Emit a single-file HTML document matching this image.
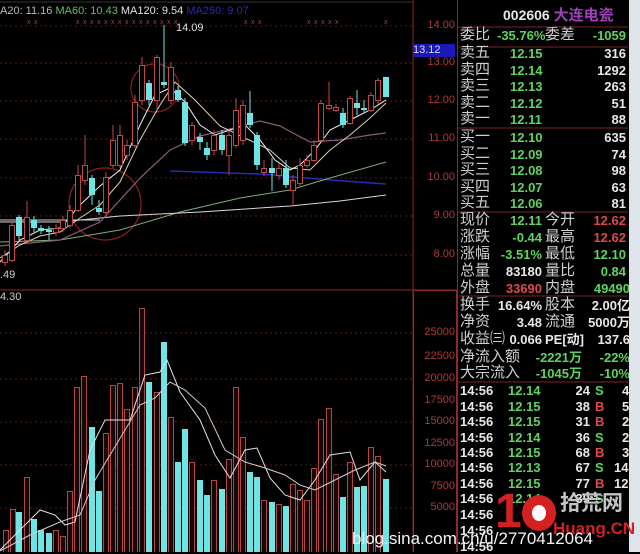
<!DOCTYPE html>
<html><head><meta charset="utf-8">
<style>
html,body{margin:0;padding:0;background:#000;}
body{width:640px;height:552px;position:relative;overflow:hidden;font-family:"Liberation Sans","Noto Sans CJK SC",sans-serif;}
.t{position:absolute;white-space:nowrap;font-size:13px;line-height:15px;font-weight:bold;}
.l{color:#cfcfcf;font-size:15px;font-weight:normal;}
.g{color:#5fd35f;}
.r{color:#e0484f;}
.w{color:#e8e8e8;}
.ra{text-align:right;}
.ax{position:absolute;color:#b03838;font-size:11px;right:185px;text-align:right;}
</style></head><body>
<svg id="c" width="640" height="552" style="position:absolute;left:0;top:0"></svg>

<div class="t" style="left:0;top:4px;font-size:11px;color:#b8b8b8;font-weight:normal">A20: 11.16 <span style="color:#5fc05f">MA60: 10.43</span> <span style="color:#e0e0e0">MA120: 9.54</span> <span style="color:#2a2ab0">MA250: 9.07</span></div>
<div class="t" style="left:176px;top:21px;font-size:11px;color:#ddd;font-weight:normal">14.09</div>
<div class="t" style="left:0;top:268px;font-size:11px;color:#ccc;font-weight:normal">.49</div>
<div class="t" style="left:0;top:290px;font-size:11px;color:#ccc;font-weight:normal">4.30</div>

<div class="ax" style="top:19px">14.00</div>
<div class="ax" style="top:56px">13.00</div>
<div class="ax" style="top:94px">12.00</div>
<div class="ax" style="top:132px">11.00</div>
<div class="ax" style="top:171px">10.00</div>
<div class="ax" style="top:209px">9.00</div>
<div class="ax" style="top:248px">8.00</div>
<div style="position:absolute;left:413px;top:44px;width:42px;height:13px;background:#1a1ab8;color:#d8d8ff;font-size:11px;line-height:13px">13.12</div>
<div class="ax" style="top:326px">25000</div>
<div class="ax" style="top:350px">22500</div>
<div class="ax" style="top:372px">20000</div>
<div class="ax" style="top:394px">17500</div>
<div class="ax" style="top:415px">15000</div>
<div class="ax" style="top:437px">12500</div>
<div class="ax" style="top:458px">10000</div>
<div class="ax" style="top:480px">7500</div>
<div class="ax" style="top:501px">5000</div>

<div class="t w" style="left:503px;top:8px;font-size:14px">002606 <span style="color:#a040b8;font-size:15px">大连电瓷</span></div>
<div class="t l" style="left:460px;top:27px">委比</div><div class="t g" style="left:497px;top:28px">-35.76%</div><div class="t l" style="left:545px;top:27px">委差</div><div class="t g ra" style="left:580px;top:28px;width:46px">-1059</div>

<div class="t l" style="left:460px;top:45px">卖五</div><div class="t g" style="left:510px;top:46px">12.15</div><div class="t w ra" style="left:580px;top:46px;width:46px">316</div>
<div class="t l" style="left:460px;top:62px">卖四</div><div class="t g" style="left:510px;top:63px">12.14</div><div class="t w ra" style="left:580px;top:63px;width:46px">1292</div>
<div class="t l" style="left:460px;top:78px">卖三</div><div class="t g" style="left:510px;top:79px">12.13</div><div class="t w ra" style="left:580px;top:79px;width:46px">263</div>
<div class="t l" style="left:460px;top:95px">卖二</div><div class="t g" style="left:510px;top:96px">12.12</div><div class="t w ra" style="left:580px;top:96px;width:46px">51</div>
<div class="t l" style="left:460px;top:111px">卖一</div><div class="t g" style="left:510px;top:112px">12.11</div><div class="t w ra" style="left:580px;top:112px;width:46px">88</div>

<div class="t l" style="left:460px;top:129px">买一</div><div class="t g" style="left:510px;top:130px">12.10</div><div class="t w ra" style="left:580px;top:130px;width:46px">635</div>
<div class="t l" style="left:460px;top:146px">买二</div><div class="t g" style="left:510px;top:147px">12.09</div><div class="t w ra" style="left:580px;top:147px;width:46px">74</div>
<div class="t l" style="left:460px;top:162px">买三</div><div class="t g" style="left:510px;top:163px">12.08</div><div class="t w ra" style="left:580px;top:163px;width:46px">98</div>
<div class="t l" style="left:460px;top:179px">买四</div><div class="t g" style="left:510px;top:180px">12.07</div><div class="t w ra" style="left:580px;top:180px;width:46px">63</div>
<div class="t l" style="left:460px;top:195px">买五</div><div class="t g" style="left:510px;top:196px">12.06</div><div class="t w ra" style="left:580px;top:196px;width:46px">81</div>

<div class="t l" style="left:460px;top:212px">现价</div><div class="t g ra" style="left:490px;top:213px;width:52px">12.11</div><div class="t l" style="left:545px;top:212px">今开</div><div class="t r ra" style="left:580px;top:213px;width:46px">12.62</div>
<div class="t l" style="left:460px;top:229px">涨跌</div><div class="t g ra" style="left:490px;top:230px;width:52px">-0.44</div><div class="t l" style="left:545px;top:229px">最高</div><div class="t r ra" style="left:580px;top:230px;width:46px">12.62</div>
<div class="t l" style="left:460px;top:246px">涨幅</div><div class="t g ra" style="left:490px;top:247px;width:52px">-3.51%</div><div class="t l" style="left:545px;top:246px">最低</div><div class="t g ra" style="left:580px;top:247px;width:46px">12.10</div>
<div class="t l" style="left:460px;top:263px">总量</div><div class="t w ra" style="left:490px;top:264px;width:52px">83180</div><div class="t l" style="left:545px;top:263px">量比</div><div class="t g ra" style="left:580px;top:264px;width:46px">0.84</div>
<div class="t l" style="left:460px;top:280px">外盘</div><div class="t r ra" style="left:490px;top:281px;width:52px">33690</div><div class="t l" style="left:545px;top:280px">内盘</div><div class="t g ra" style="left:580px;top:281px;width:50px">49490</div>

<div class="t l" style="left:460px;top:297px">换手</div><div class="t w ra" style="left:490px;top:298px;width:52px">16.64%</div><div class="t l" style="left:545px;top:297px">股本</div><div class="t w ra" style="left:580px;top:298px;width:50px">2.00亿</div>
<div class="t l" style="left:460px;top:314px">净资</div><div class="t w ra" style="left:490px;top:315px;width:52px">3.48</div><div class="t l" style="left:545px;top:314px">流通</div><div class="t w ra" style="left:580px;top:315px;width:50px">5000万</div>
<div class="t l" style="left:460px;top:331px">收益㈢</div><div class="t w ra" style="left:490px;top:332px;width:52px">0.066</div><div class="t w" style="left:545px;top:332px">PE[动]</div><div class="t w ra" style="left:580px;top:332px;width:50px">137.6</div>
<div class="t l" style="left:460px;top:349px">净流入额</div><div class="t g ra" style="left:520px;top:350px;width:62px">-2221万</div><div class="t g ra" style="left:580px;top:350px;width:50px">-22%</div>
<div class="t l" style="left:460px;top:365px">大宗流入</div><div class="t g ra" style="left:520px;top:366px;width:62px">-1045万</div><div class="t g ra" style="left:580px;top:366px;width:50px">-10%</div>

<div class="t w" style="left:460px;top:383px">14:56</div><div class="t g" style="left:508px;top:383px">12.14</div><div class="t w ra" style="left:560px;top:383px;width:30px">24</div><div class="t g" style="left:595px;top:383px">S</div><div class="t w" style="left:622px;top:383px">4</div>
<div class="t w" style="left:460px;top:399px">14:56</div><div class="t g" style="left:508px;top:399px">12.15</div><div class="t w ra" style="left:560px;top:399px;width:30px">38</div><div class="t r" style="left:595px;top:399px">B</div><div class="t w" style="left:622px;top:399px">5</div>
<div class="t w" style="left:460px;top:414px">14:56</div><div class="t g" style="left:508px;top:414px">12.15</div><div class="t w ra" style="left:560px;top:414px;width:30px">31</div><div class="t r" style="left:595px;top:414px">B</div><div class="t w" style="left:622px;top:414px">2</div>
<div class="t w" style="left:460px;top:430px">14:56</div><div class="t g" style="left:508px;top:430px">12.14</div><div class="t w ra" style="left:560px;top:430px;width:30px">36</div><div class="t g" style="left:595px;top:430px">S</div><div class="t w" style="left:622px;top:430px">2</div>
<div class="t w" style="left:460px;top:445px">14:56</div><div class="t g" style="left:508px;top:445px">12.15</div><div class="t w ra" style="left:560px;top:445px;width:30px">68</div><div class="t r" style="left:595px;top:445px">B</div><div class="t w" style="left:622px;top:445px">3</div>
<div class="t w" style="left:460px;top:460px">14:56</div><div class="t g" style="left:508px;top:460px">12.13</div><div class="t w ra" style="left:560px;top:460px;width:30px">67</div><div class="t g" style="left:595px;top:460px">S</div><div class="t w" style="left:614px;top:460px">14</div>
<div class="t w" style="left:460px;top:476px">14:56</div><div class="t g" style="left:508px;top:476px">12.15</div><div class="t w ra" style="left:560px;top:476px;width:30px">77</div><div class="t r" style="left:595px;top:476px">B</div><div class="t w" style="left:614px;top:476px">12</div>
<div class="t w" style="left:460px;top:491px">14:56</div><div class="t g" style="left:508px;top:491px">12.14</div><div class="t w ra" style="left:560px;top:491px;width:30px">39</div><div class="t g" style="left:595px;top:491px">S</div>
<div class="t w" style="left:460px;top:507px">14:56</div>
<div class="t w" style="left:460px;top:523px">14:56</div>
<div class="t w" style="left:460px;top:539px">14:56</div>

<div style="position:absolute;left:629px;top:0;width:11px;height:552px;background:#dfe3ea"></div>

<div class="t" style="left:495px;top:486px;font-size:48px;line-height:52px;font-weight:bold;color:#d42020">1</div>
<div style="position:absolute;left:522px;top:495px;width:34px;height:36px;border-radius:50%;background:#d42020"></div>
<div style="position:absolute;left:532px;top:505px;width:14px;height:16px;border-radius:50%;background:#fff"></div>
<div class="t" style="left:560px;top:492px;font-size:21px;line-height:23px;color:#c4c4c4">拾荒网</div>
<div class="t" style="left:553px;top:520px;font-size:17px;line-height:18px;color:#d42020">Huang.CN</div>
<div class="t" style="left:352px;top:530px;font-size:17px;line-height:18px;color:#f4f4f4;font-weight:normal">blog.sina.com.cn/u/2770412064</div>

<script>
var s=document.getElementById('c'),NS='http://www.w3.org/2000/svg';
function el(n,a){var e=document.createElementNS(NS,n);for(var k in a)e.setAttribute(k,a[k]);s.appendChild(e);return e;}
[26,63,101,139,178,216,255].forEach(function(y){el('line',{x1:0,y1:y,x2:412,y2:y,stroke:'#5a1a1a','stroke-dasharray':'2,3'});});
[333,379,422,465,508].forEach(function(y){el('line',{x1:0,y1:y,x2:412,y2:y,stroke:'#5a1a1a','stroke-dasharray':'2,3'});});
el('line',{x1:413,y1:0,x2:413,y2:552,stroke:'#8a2a2a'});
el('line',{x1:457.5,y1:0,x2:457.5,y2:552,stroke:'#8a2a2a'});
el('line',{x1:0,y1:290,x2:457,y2:290,stroke:'#8a2a2a'});
el('rect',{x:413.5,y:290.5,width:43,height:262,fill:'none',stroke:'#8a2a2a'});
[27,47,128,212,296,382].forEach(function(y){el('line',{x1:458,y1:y,x2:628,y2:y,stroke:'#7a2424'});});
el('line',{x1:0,y1:2,x2:413,y2:2,stroke:'#333'});
for(var x=20;x<390;x+=7){if((x>20&&x<36)||(x>75&&x<175)||(x>240&&x<260)||(x>305&&x<340)||(x>378&&x<390))el('text',{x:x,y:24,fill:'#a04060','font-size':7}).textContent='x';}
var C=[[5,255,262,250,266,0],[12,225,260,220,262,0],[19,217,236,215,240,1],[27,217,240,201,242,0],[34,220,228,216,232,1],[41,228,231,225,234,1],[49,230,232,226,240,1],[56,228,232,224,236,0],[63,220,228,216,232,0],[70,210,225,205,228,0],[78,175,210,165,212,0],[85,165,180,135,185,0],[92,178,195,175,205,1],[99,208,212,200,215,1],[106,177,212,172,214,0],[113,140,165,125,168,0],[120,135,165,125,168,0],[127,145,155,140,160,0],[135,102,145,95,148,0],[142,65,100,57,105,0],[149,83,100,80,105,1],[157,57,100,55,110,0],[164,82,85,25,88,1],[171,67,100,62,104,0],[178,90,100,86,102,1],[185,102,143,98,146,1],[192,125,140,122,145,0],[200,137,142,133,150,1],[207,148,155,142,160,1],[214,135,150,130,155,0],[222,135,150,130,155,1],[229,135,155,130,175,0],[236,110,145,98,148,0],[243,105,140,100,145,0],[250,113,125,91,128,1],[257,135,165,132,170,1],[264,168,172,160,176,0],[272,168,173,158,191,1],[279,168,175,163,180,0],[286,168,185,160,188,1],[293,180,190,175,207,0],[300,165,183,158,186,0],[307,160,165,155,168,0],[314,145,160,140,162,0],[321,103,140,100,142,0],[329,105,108,82,110,0],[336,107,110,104,112,0],[343,113,125,108,128,1],[350,98,123,96,125,0],[357,103,108,90,115,1],[364,108,110,100,113,1],[371,95,110,92,112,0],[378,80,100,78,104,0],[386,77,97,77,97,1]];
var V=[[6,530,0],[13,509,0],[19,512,1],[27,477,0],[34,519,1],[41,530,1],[49,533,1],[56,530,0],[63,536,0],[70,491,0],[77,387,0],[84,376,0],[92,427,1],[99,491,1],[106,433,0],[113,385,0],[120,383,0],[127,409,0],[135,387,0],[142,308,0],[149,382,1],[157,392,0],[164,342,1],[171,417,0],[178,462,1],[185,429,1],[192,462,0],[200,480,1],[207,495,1],[214,480,0],[222,489,1],[229,459,0],[236,387,0],[243,437,0],[250,472,1],[257,477,1],[264,500,0],[272,502,1],[279,504,0],[286,506,1],[293,484,0],[300,490,0],[307,500,0],[314,468,0],[321,419,0],[329,408,0],[336,474,0],[343,497,1],[350,462,0],[357,487,1],[364,486,1],[371,447,0],[378,456,0],[386,479,1]];
V.forEach(function(v){if(v[2])el('rect',{x:v[0]-3,y:v[1],width:6,height:552-v[1],fill:'#6fe4e4'});else el('rect',{x:v[0]-2.5,y:v[1]+.5,width:5,height:552-v[1],fill:'#1a0606',stroke:'#b04848'});});
function pl(p,c,w){el('polyline',{points:p.map(function(a){return a.join(',')}).join(' '),fill:'none',stroke:c,'stroke-width':w||1});}
pl([[0,550],[20,530],[40,510],[55,515],[65,525],[75,522],[90,450],[105,420],[115,420],[130,420],[145,375],[160,372],[167,360],[180,392],[200,420],[215,455],[230,478],[245,450],[257,448],[270,478],[285,495],[300,500],[315,480],[330,455],[350,452],[360,480],[375,462],[386,472]],'#e8e0e0');
pl([[0,551],[30,535],[60,522],[80,515],[95,480],[110,455],[125,430],[140,405],[155,398],[170,382],[185,390],[205,408],[225,450],[245,462],[265,468],[285,475],[300,485],[315,490],[335,480],[355,470],[375,462],[386,466]],'#d8c8c8');
el('circle',{cx:155,cy:88,r:24,fill:'none',stroke:'#8a2020','stroke-width':1.2});
el('circle',{cx:105,cy:204,r:36,fill:'none',stroke:'#8a2020','stroke-width':1.2});
pl([[0,220],[100,220]],'#cfcfcf');
pl([[170,171],[260,174],[330,180],[386,184]],'#2a2ab8',1.5);
pl([[0,242],[60,240],[120,230],[180,212],[240,198],[290,190],[330,178],[386,162]],'#7ab07a');
pl([[0,222],[60,222],[120,216],[200,212],[290,206],[340,201],[386,195]],'#d8d8d8');
pl([[0,246],[60,240],[100,222],[140,178],[170,150],[200,136],[230,129],[260,121],[280,126],[310,142],[340,140],[370,135],[386,133]],'#8a5a7a',1.2);
pl([[0,258],[20,245],[40,236],[60,232],[80,218],[100,205],[120,182],[140,140],[160,105],[175,82],[195,100],[220,126],[245,138],[270,150],[290,168],[310,170],[330,150],[350,135],[370,118],[386,103]],'#e0d0b0');
pl([[0,262],[20,240],[40,230],[60,228],[80,205],[100,186],[120,170],[140,125],[155,95],[170,88],[185,102],[200,125],[215,135],[230,130],[245,125],[260,140],[275,160],[290,170],[300,165],[315,150],[330,130],[350,120],[370,110],[386,100]],'#f0f0f0');
C.forEach(function(c){var col=c[5]?'#6fe4e4':'#c04848';el('line',{x1:c[0],y1:c[3],x2:c[0],y2:c[4],stroke:col});
 if(c[5])el('rect',{x:c[0]-3,y:c[1],width:6,height:Math.max(2,c[2]-c[1]),fill:col});else el('rect',{x:c[0]-2.5,y:c[1]+.5,width:5,height:Math.max(1,c[2]-c[1]),fill:'#000',stroke:col});});
</script>
</body></html>
